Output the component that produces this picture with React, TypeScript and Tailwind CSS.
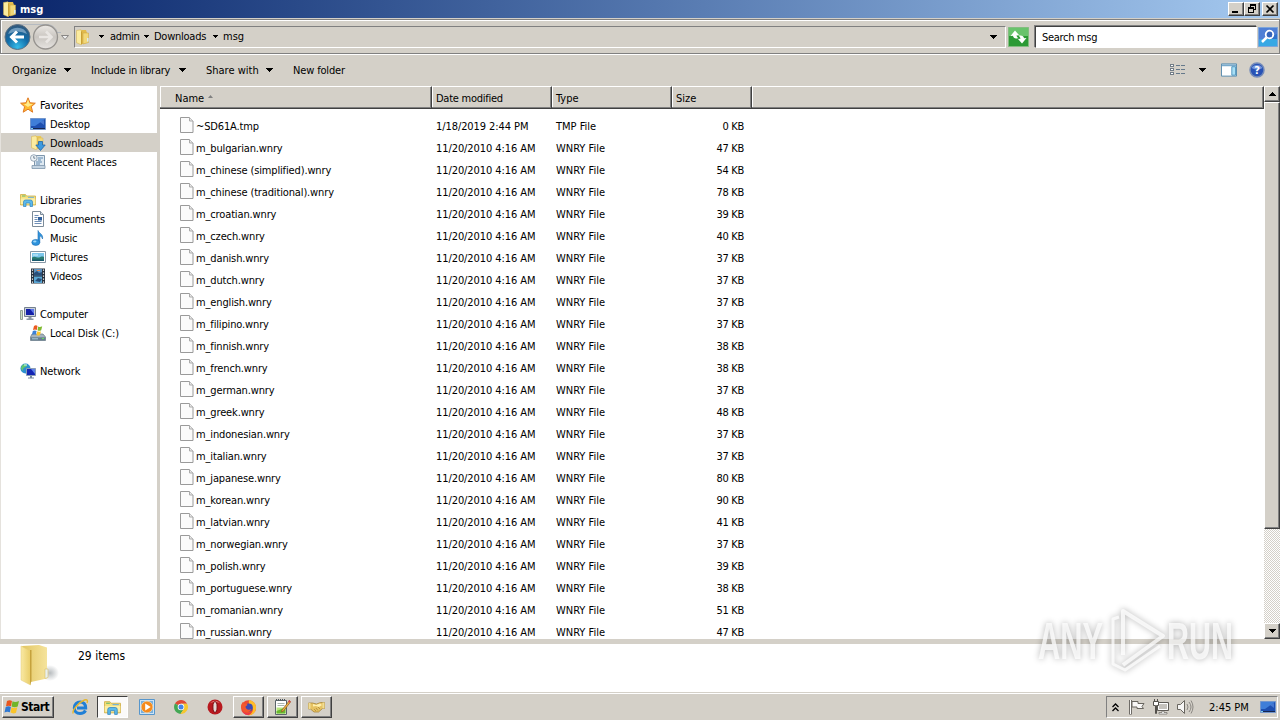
import type { ReactNode } from "react";

type IconProps = { size?: number };

type NavItem = {
  label: string;
  icon: ReactNode;
  child?: boolean;
  active?: boolean;
};

const raised =
  "border border-t-white border-l-white border-r-[#404040] border-b-[#404040] shadow-[inset_-1px_-1px_0_#808080]";

function FolderIcon({ size = 16 }: IconProps) {
  return (
    <svg width={size} height={size} viewBox="0 0 16 16" className="shrink-0">
      <path d="M6 1h5l1 3v10l-5 1z" fill="#e3bc4c" />
      <path d="M8 4h5.500v9.500L8 15z" fill="#f2d878" stroke="#c9a33c" strokeWidth=".5" />
      <path d="M1.500 1.500L6 .8l1 1.700V15l-1 .7-4.500-2z" fill="#fbeb9f" stroke="#d2ae48" strokeWidth=".5" />
      <path d="M6 2l1 .5V15l-1 .5z" fill="#c9a035" />
      <path d="M12 9h1.500v3.500H12z" fill="#dcebed" />
    </svg>
  );
}

function BigFolderIcon() {
  return (
    <svg width="42" height="44" viewBox="0 0 42 44">
      <defs>
        <linearGradient id="flap">
          <stop offset="0" stopColor="#f9e9a4" />
          <stop offset="1" stopColor="#e9cd68" />
        </linearGradient>
        <linearGradient id="leaf">
          <stop offset="0" stopColor="#e2c662" />
          <stop offset="1" stopColor="#f5e39c" />
        </linearGradient>
        <radialGradient id="shade">
          <stop offset="0" stopColor="#9aa0a4" stopOpacity=".7" />
          <stop offset="1" stopColor="#9aa0a4" stopOpacity="0" />
        </radialGradient>
      </defs>
      <ellipse cx="31" cy="29" rx="9" ry="8" fill="url(#shade)" />
      <path d="M3 2L20 1l8 2.500v31L12 38z" fill="url(#leaf)" />
      <path d="M2 2l9.500 5v34L2 36z" fill="url(#flap)" stroke="#e2ca78" strokeWidth=".5" />
      <path d="M11 6l1.500 0v31l-1.500 4z" fill="#c5a23d" />
      <path d="M26 25h3v8.500l-3 1z" fill="#e9f0ef" stroke="#d8bf6b" strokeWidth=".6" />
    </svg>
  );
}

function StarIcon() {
  return (
    <svg width="16" height="16" viewBox="0 0 16 16">
      <path
        d="M8 .8l2 5 5.300.4-4 3.500 1.400 5.500L8 12.200 3.200 15.200l1.400-5.500-4-3.500L6 5.800z"
        fill="#ffb92e"
        stroke="#e07a26"
      />
      <path d="M8 2.500l1.500 4.300 3.500.4-3.500 1.800L8 10l-4-2.800 2.500-.4z" fill="#ffeb8c" />
    </svg>
  );
}

function DesktopIcon({ size = 16 }: IconProps) {
  return (
    <svg width={size} height={size} viewBox="0 0 16 16">
      <path d="M.5 2.500h15v11H.5z" fill="#1d4fb0" stroke="#7396cc" />
      <path d="M1 3h14L5 10H1z" fill="#3f7ed8" />
      <path d="M1 12h14v1H1z" fill="#16264f" />
      <path d="M1 12h2v1H1z" fill="#79d0f0" />
      <path d="M10 6l4-2v5z" fill="#6d9ff0" opacity=".5" />
    </svg>
  );
}

function DownloadsIcon() {
  return (
    <svg width="16" height="16" viewBox="0 0 16 16">
      <path d="M6 1h5l1 3v9l-5 1z" fill="#e9c85a" />
      <path d="M8 3h5v9l-5 2z" fill="#f2d878" stroke="#d0ab48" strokeWidth=".4" />
      <path d="M1.500 1.500L6 .8l1 1.700V14l-1 .7-4.500-2z" fill="#fbeb9f" stroke="#d2ae48" strokeWidth=".5" />
      <path d="M8.500 6.500h4V10h2.700L10.500 15.500 5.800 10h2.700z" fill="#3d9ae0" stroke="#1f65aa" strokeWidth=".8" />
    </svg>
  );
}

function RecentIcon() {
  return (
    <svg width="16" height="16" viewBox="0 0 16 16">
      <path d="M4.500 1.500h10v11h-10z" fill="#dde8f1" stroke="#7e96ac" />
      <path d="M2 11.500h13v3H2z" fill="#c4d4e2" stroke="#7e96ac" strokeWidth=".8" />
      <path d="M8 4h5M8 6h3M6 8h6M6 10h4" stroke="#5f88b0" />
      <circle cx="3.800" cy="4" r="3.300" fill="#eef3f7" stroke="#8093a6" strokeWidth=".8" />
      <path d="M3.800 2v2.200h1.500" fill="none" stroke="#53687c" strokeWidth=".8" />
    </svg>
  );
}

function LibraryIcon({ size = 16 }: IconProps) {
  return (
    <svg width={size} height={size} viewBox="0 0 16 16">
      <path d="M.5 2.500h5l1 1.500h9v9H.5z" fill="#f6e17c" stroke="#cfae45" strokeWidth=".8" />
      <path d="M2 3.500h3.500v1H2z" fill="#62b56c" />
      <path d="M8 4.800h6v1H8z" fill="#69aee0" />
      <path d="M.7 6.500h14.600V12H.7z" fill="#fbeea6" />
      <path d="M3.500 14.500V10q0-2 2-2h5q2 0 2 2v4.500h-2.500V11h-4v3.500z" fill="#5cb9ea" stroke="#2f83bd" strokeWidth=".7" />
    </svg>
  );
}

function DocumentIcon() {
  return (
    <svg width="16" height="16" viewBox="0 0 16 16">
      <path d="M2.500.5h8l3 3v12h-11z" fill="#fff" stroke="#7c8b99" />
      <path d="M10.500.5v3h3" fill="#d9e2e9" stroke="#7c8b99" />
      <path d="M4.500 4.500h4M4.500 6.500h3M4.500 8.500h3M4.500 10.500h7M4.500 12.500h7" stroke="#6f8fb7" />
      <path d="M8 6h4v3.500H8z" fill="#2f5f9c" />
    </svg>
  );
}

function MusicIcon() {
  return (
    <svg width="16" height="16" viewBox="0 0 16 16">
      <path d="M8 .5c1 3 5.500 3.500 4.500 8.500-.5-2-1.500-2.700-2.700-3v6.500H8z" fill="#3397de" stroke="#1b6db4" strokeWidth=".6" />
      <ellipse cx="5.800" cy="12.400" rx="4" ry="3" fill="#2e93dc" stroke="#1b6db4" strokeWidth=".6" />
      <ellipse cx="4.800" cy="11.500" rx="1.700" ry="1" fill="#9fd8fa" />
    </svg>
  );
}

function PictureIcon() {
  return (
    <svg width="16" height="16" viewBox="0 0 16 16">
      <path d="M.5 2.500h15v11H.5z" fill="#fff" stroke="#8797a5" />
      <path d="M2 4h12v8H2z" fill="#7cc6ea" />
      <path d="M2 8.500c3-2 5 .5 7 0s3-1.500 5-.5v4H2z" fill="#287a70" />
      <path d="M2 10.500h12V12H2z" fill="#17596d" />
      <path d="M3 5.500h5v1H3z" fill="#d7f1fb" />
    </svg>
  );
}

function VideoIcon() {
  return (
    <svg width="16" height="16" viewBox="0 0 16 16">
      <path d="M1 .5h14v15H1z" fill="#252f3b" />
      <path d="M4 1h8v6.500H4z" fill="#5c91bf" />
      <path d="M4 8.500h8V15H4z" fill="#5aa7d5" />
      <path d="M4 5l3-2 2 2 3-1v3.500H4zM5 13l3-3 4 1-2 3z" fill="#284e79" />
      <path d="M7 2h3v1H7z" fill="#e58a54" />
      <path d="M2.500 1.500v14M13.500 1.500v14" stroke="#fff" strokeWidth="1.200" strokeDasharray="1.300 1.700" />
    </svg>
  );
}

function ComputerIcon() {
  return (
    <svg width="16" height="16" viewBox="0 0 16 16">
      <path d="M.5 4.500h2v9h-2z" fill="#cfe0c5" stroke="#7f8c86" strokeWidth=".8" />
      <path d="M4.500 1.500h11v9h-11z" fill="#c8d0da" stroke="#74808e" />
      <path d="M6 3h8v6H6z" fill="#1420a8" />
      <path d="M10 3h4v5z" fill="#5d77e8" />
      <path d="M8.500 11h3v1.500h2V14h-7v-1.500h2z" fill="#8b97a5" />
    </svg>
  );
}

function DiskIcon() {
  return (
    <svg width="16" height="16" viewBox="0 0 16 16">
      <path d="M2 9h11l2.500 3v3.500H.5V12z" fill="#a4b2bd" stroke="#677783" strokeWidth=".7" />
      <path d="M.8 12.300h14.500v3H.8z" fill="#667e8f" />
      <path d="M2 13.300h6v1H2z" fill="#a9cbdc" />
      <path d="M12 13h2v1h-2z" fill="#62df58" />
      <path d="M4 1c1.300-.9 2.500-.9 3.500 0L6.800 5C5.500 4.300 4.500 4.300 3 5z" fill="#eb5b21" />
      <path d="M8.200 1.500c1.500.8 2.500.6 4-.3l-1 4c-1.300.8-2.500.8-3.700.1z" fill="#7fba30" />
      <path d="M2.800 6c1.500-.8 2.700-.7 3.800 0l-.8 3.700c-1.300-.7-2.300-.6-3.800.1z" fill="#3b81d6" />
      <path d="M7.300 6.300c1.300.7 2.300.6 3.700-.1l-1 3.800c-1.200.7-2.500.7-3.500 0z" fill="#f9c52e" />
    </svg>
  );
}

function NetworkIcon() {
  return (
    <svg width="16" height="16" viewBox="0 0 16 16">
      <circle cx="5.500" cy="5.500" r="5" fill="#2c8fd0" />
      <path d="M2 2.500c2-2 5-1.500 5 0S3 4 3 6.500 1.500 7 1 5z" fill="#62c76e" />
      <path d="M4 1.500h3v1H4z" fill="#cdf3f3" />
      <path d="M6.500 5.500h9v7h-9z" fill="#1425b3" stroke="#8b9db5" />
      <path d="M11 6h4v5z" fill="#5f82ea" />
      <path d="M10 13h2v1.500h2v1H8v-1h2z" fill="#76899d" />
    </svg>
  );
}

function FileIcon() {
  return (
    <svg width="14" height="16" viewBox="0 0 14 16" className="mb-0.5 shrink-0">
      <path d="M.5.5h9l3.500 3.500v11.500H.5z" fill="#fbfbfb" stroke="#9a9a9a" />
      <path d="M9.500.5v3.500H13" fill="#e8e8e8" stroke="#aaa" />
    </svg>
  );
}

function WindowsFlag() {
  return (
    <svg width="16" height="16" viewBox="0 0 16 16" className="shrink-0">
      <path d="M3 2c2-1.200 3.700-1 5 0L7 7.300C5.500 6.400 4 6.400 2 7.300z" fill="#e8561f" />
      <path d="M8.500 2.300c2 1.100 4 .8 6.500-.3l-1.300 5.400c-2 1-4.200 1-6.100 0z" fill="#70b52a" />
      <path d="M1.700 8c2-1 3.700-.9 5.200 0l-1 5.300C4 12.500 2.500 12.500.5 13.400z" fill="#2f78d2" />
      <path d="M7.500 8.200c1.800 1 3.800.9 5.800 0L12 13.700c-2 1-3.500.9-5.500-.1z" fill="#fac42a" />
    </svg>
  );
}

function ExplorerE() {
  return (
    <svg width="18" height="18" viewBox="0 0 18 18">
      <path
        d="M14.500 12.500c-1 2-3 3-5.500 3-3.500 0-5.700-2.300-5.700-5.500C3.300 6.500 6 4 9.200 4c3.400 0 5.600 2.300 5.500 6H6"
        fill="none"
        stroke="#1f7fd6"
        strokeWidth="3"
      />
      <path d="M2.300 15.500C.5 13 8 4 13.500 2c3-1 3.500 1 2.500 3" fill="none" stroke="#e5b62c" strokeWidth="1.400" />
    </svg>
  );
}

function MediaPlayerIcon() {
  return (
    <svg width="16" height="16" viewBox="0 0 16 16">
      <path d="M.5.500h15v15H.5z" fill="#cbe3f6" stroke="#5796cc" />
      <path d="M2 2h12v12H2z" fill="#79b0dd" />
      <circle cx="8" cy="8" r="5.800" fill="#f58a1c" stroke="#ffd6a0" strokeWidth=".7" />
      <path d="M6.200 4.500v7L11.700 8z" fill="#fff" />
    </svg>
  );
}

function ChromeIcon() {
  return (
    <svg width="14" height="14" viewBox="0 0 14 14">
      <path d="M7 7L1 3.500A7 7 0 0113.100 3.700H7z" fill="#df4937" />
      <path d="M7 7L1 3.500a7 7 0 005.500 10.500L10 8.700z" fill="#43a754" />
      <path d="M7 3.700h6.100A7 7 0 016.500 14L10 8.700z" fill="#f6c72e" />
      <circle cx="7" cy="7" r="3.300" fill="#fff" />
      <circle cx="7" cy="7" r="2.500" fill="#4383e8" />
    </svg>
  );
}

function OperaIcon() {
  return (
    <svg width="16" height="16" viewBox="0 0 16 16">
      <circle cx="8" cy="8" r="7.500" fill="#b8191f" />
      <path d="M3 4.500a6 6 0 0110 0C11 2.500 5 2.500 3 4.500z" fill="#e0716d" />
      <ellipse cx="8" cy="8" rx="2.100" ry="5.400" fill="#e3d6d3" stroke="#7b0b10" />
    </svg>
  );
}

function FirefoxIcon() {
  return (
    <svg width="17" height="17" viewBox="0 0 17 17">
      <circle cx="8.500" cy="8.800" r="7.500" fill="#ee4c31" />
      <path d="M9 1c5 1 8 5 6.800 9.500C15 14 12 16.300 8.500 16.300c5-2 5.500-7 2.500-9C9 6 8.500 4 9 1z" fill="#ffbd28" />
      <circle cx="8.800" cy="8.500" r="4" fill="#3b4bb5" />
      <path d="M1 8c0-2.500 1-4 2-5l1 2c2-.7 3 0 3.500 1L5.500 7.500c0 3 3 4 6 2.500-1 3-6 4.500-8.500 1.500z" fill="#f2582f" />
      <path d="M2 12c3 3.500 7 3 9 1.500-2 3-6.500 3-9-1.500z" fill="#e92961" />
    </svg>
  );
}

function NotepadIcon() {
  return (
    <svg width="17" height="17" viewBox="0 0 17 17">
      <path d="M1.500 1.500h11v14h-11z" fill="#fff" stroke="#5b6469" />
      <path d="M2 .5h10" stroke="#49545c" strokeWidth="1.600" strokeDasharray="1 1" />
      <path d="M3.500 4.500h7M3.500 6.500h7" stroke="#a9b5ae" />
      <path d="M2.500 8.500h9v6h-9z" fill="#b9e67c" />
      <path d="M2.500 12l9-3.500v6h-9z" fill="#69b92e" />
      <path d="M15.500 1.500L8 11l-.5 2 2-1L16.500 3z" fill="#f1b33d" stroke="#8c5826" strokeWidth=".7" />
      <path d="M15 1l1.800 1.500-1 1.300-1.700-1.400z" fill="#d8424a" />
    </svg>
  );
}

function HandshakeIcon() {
  return (
    <svg width="17" height="12" viewBox="0 0 17 12">
      <path d="M.5 2h4l4 1 4-1.500h4v6h-2l-4 3.500H6L2.500 8h-2z" fill="#e6c263" stroke="#a17c2c" strokeWidth=".7" />
      <path d="M5 3l3 1 4-1.500 2 1.500-3 2-3-1-3 .5z" fill="#fff0ae" />
      <path d="M.5 2h2v6h-2zM14.500 1.500h2v6h-2z" fill="#f1dd93" />
      <path d="M6 8l2 2M8 7l2 2.500M10 6l2 2" stroke="#a58333" strokeWidth=".7" />
    </svg>
  );
}

function Caret({ className = "" }: { className?: string }) {
  return (
    <svg width="7" height="4" viewBox="0 0 7 4" className={className} shapeRendering="crispEdges">
      <path d="M0 0h7L3.500 4z" fill="#000" />
    </svg>
  );
}

function CrumbCaret() {
  return (
    <svg width="5" height="3" viewBox="0 0 5 3" shapeRendering="crispEdges">
      <path d="M0 0h5v1H4v1H3v1H2V2H1V1H0z" fill="#000" />
    </svg>
  );
}

const nav: NavItem[][] = [
  [
    { label: "Favorites", icon: <StarIcon /> },
    { label: "Desktop", icon: <DesktopIcon />, child: true },
    { label: "Downloads", icon: <DownloadsIcon />, child: true, active: true },
    { label: "Recent Places", icon: <RecentIcon />, child: true },
  ],
  [
    { label: "Libraries", icon: <LibraryIcon /> },
    { label: "Documents", icon: <DocumentIcon />, child: true },
    { label: "Music", icon: <MusicIcon />, child: true },
    { label: "Pictures", icon: <PictureIcon />, child: true },
    { label: "Videos", icon: <VideoIcon />, child: true },
  ],
  [
    { label: "Computer", icon: <ComputerIcon /> },
    { label: "Local Disk (C:)", icon: <DiskIcon />, child: true },
  ],
  [{ label: "Network", icon: <NetworkIcon /> }],
];

const messages: [string, number][] = [
  ["bulgarian", 47],
  ["chinese (simplified)", 54],
  ["chinese (traditional)", 78],
  ["croatian", 39],
  ["czech", 40],
  ["danish", 37],
  ["dutch", 37],
  ["english", 37],
  ["filipino", 37],
  ["finnish", 38],
  ["french", 38],
  ["german", 37],
  ["greek", 48],
  ["indonesian", 37],
  ["italian", 37],
  ["japanese", 80],
  ["korean", 90],
  ["latvian", 41],
  ["norwegian", 37],
  ["polish", 39],
  ["portuguese", 38],
  ["romanian", 51],
  ["russian", 47],
];

const files = [
  { name: "~SD61A.tmp", date: "1/18/2019 2:44 PM", type: "TMP File", size: 0 },
  ...messages.map(([lang, size]) => ({
    name: `m_${lang}.wnry`,
    date: "11/20/2010 4:16 AM",
    type: "WNRY File",
    size,
  })),
];

function TitleBar() {
  const button = `flex h-[14px] w-4 items-center justify-center bg-[#d4d0c8] ${raised}`;
  return (
    <div className="flex h-[18px] shrink-0 items-center bg-linear-to-r from-[#0a246a] to-[#a6caf0] pr-0.5 pl-0.5">
      <FolderIcon />
      <span className="ml-[2px] flex-1 text-[11px] font-bold text-white">msg</span>
      <div className={button}>
        <svg width="12" height="10" shapeRendering="crispEdges">
          <path d="M2 7h6v2H2z" />
        </svg>
      </div>
      <div className={button}>
        <svg width="12" height="10" shapeRendering="crispEdges">
          <path d="M4 0h6v6H8V5h1V2H5v1H4zM2 3h6v6H2zM3 5v3h4V5z" fillRule="evenodd" />
        </svg>
      </div>
      <div className={`ml-0.5 ${button}`}>
        <svg width="12" height="10">
          <path d="M2.500 1.500l7 7M9.500 1.500l-7 7" stroke="#000" strokeWidth="1.700" />
        </svg>
      </div>
    </div>
  );
}

function AddressBar() {
  return (
    <div className="mt-px flex h-[35px] shrink-0 items-center border border-[#808080] pl-[3px] shadow-[inset_1px_1px_0_#fff,0_1px_0_#fff]">
      <svg width="69" height="28" viewBox="0 0 69 28" className="shrink-0">
        <defs>
          <radialGradient id="back" cx=".5" cy=".9" r=".9">
            <stop offset="0" stopColor="#36bce9" />
            <stop offset=".5" stopColor="#126ca8" />
            <stop offset="1" stopColor="#345779" />
          </radialGradient>
          <linearGradient id="forward" x2="0" y2="1">
            <stop offset="0" stopColor="#ece9e5" />
            <stop offset=".5" stopColor="#c9c5c0" />
            <stop offset="1" stopColor="#e7e4e1" />
          </linearGradient>
        </defs>
        <path d="M12 1.500h31c6 0 10 5 10 8h4" fill="none" stroke="#b5bac0" />
        <circle cx="13.500" cy="14" r="12.500" fill="url(#back)" stroke="#5f7283" />
        <path d="M4 11a10 9 0 0119 0q-9-5-19 0z" fill="#8fb3d1" opacity=".7" />
        <path d="M13 8.500L7.500 14l5.500 5.500M8 14h12" fill="none" stroke="#fff" strokeWidth="3" />
        <circle cx="41.500" cy="14" r="12" fill="url(#forward)" stroke="#96938f" strokeWidth="1.300" />
        <path d="M42 8.500l5.500 5.500-5.500 5.500M47 14H35" fill="none" stroke="#e9e6e3" strokeWidth="2.600" />
        <path d="M57.500 12.500h7L61 16.500z" fill="#eee" stroke="#898785" />
      </svg>
      <div className="ml-px flex h-[22px] flex-1 items-center border border-t-[#808080] border-r-white border-b-white border-l-[#808080]">
        <FolderIcon />
        <div className="flex items-center pl-2">
          <CrumbCaret />
          <span className="ml-[6px] w-[34px] tracking-[-0.3px]">admin</span>
          <CrumbCaret />
          <span className="ml-[5px] w-[59px] tracking-[-0.25px]">Downloads</span>
          <CrumbCaret />
          <span className="ml-[5px]">msg</span>
        </div>
        <Caret className="mr-2 ml-auto" />
      </div>
      <svg width="21" height="20" viewBox="0 0 21 20" className="ml-0.5">
        <path d="M.5.500h20v19H.5z" fill="#2c9a35" stroke="#83bd80" />
        <path d="M1 1h19v8H1z" fill="#68c36b" />
        <path d="M2.500 9L7 3.500 11 8l-2.500.3c.3 1.700 1.500 2.700 2 3.200C7 11.500 5 11 5 8.700z" fill="#fff" />
        <path d="M18.500 11L14 16.500 10 12l2.500-.3c-.3-1.700-1.500-2.700-2-3.200C14 8.500 16 9 16 11.300z" fill="#fff" />
      </svg>
      <div className="ml-[6px] flex h-[22px] w-[222px] items-center border border-t-[#404040] border-r-white border-b-white border-l-[#404040] bg-white pt-px pl-[6px] tracking-[-0.3px] shadow-[-1px_-1px_0_#808080]">
        Search msg
      </div>
      <svg width="20" height="20" viewBox="0 0 20 20" className="mr-px ml-px">
        <path d="M.5.500h19v19H.5z" fill="#3172cb" stroke="#7da5d9" />
        <path d="M1 12h18v7H1z" fill="#38a8e4" />
        <path d="M1 1h18v6L1 13z" fill="#5c84d8" opacity=".7" />
        <circle cx="11.500" cy="7.500" r="3.800" fill="#3564bb" stroke="#fff" strokeWidth="1.800" />
        <path d="M8.500 10.500L4 15" stroke="#fff" strokeWidth="2.500" />
      </svg>
    </div>
  );
}

function Toolbar() {
  return (
    <div className="flex h-[31px] shrink-0 items-center pt-px pr-[15px] pl-3">
      <span className="w-[52px]">Organize</span>
      <Caret />
      <span className="ml-5 w-[88px] tracking-[-0.22px]">Include in library</span>
      <Caret />
      <span className="ml-5 w-[60px]">Share with</span>
      <Caret />
      <span className="ml-5 tracking-[-0.15px]">New folder</span>
      <svg width="16" height="14" viewBox="0 0 16 14" className="ml-auto" shapeRendering="crispEdges">
        <path d="M.5 1.500h3v2h-3zM.5 5.500h3v2h-3zM.5 9.500h3v2h-3z" fill="#fff" stroke="#727d87" />
        <path d="M6 2.500h4M11 2.500h4M6 6.500h4M11 6.500h4M6 10.500h4M11 10.500h4" stroke="#65798b" />
      </svg>
      <Caret className="ml-[13px]" />
      <svg width="16" height="14" viewBox="0 0 17 14" className="ml-[15px]">
        <path d="M.5.500h16v13H.5z" fill="#fff" stroke="#5389ad" />
        <path d="M1 1h15v2H1z" fill="#79aacb" />
        <path d="M11.500 3.500h4v9h-4z" fill="#a8dff5" stroke="#4c92bd" />
      </svg>
      <svg width="16" height="16" viewBox="0 0 16 16" className="ml-3">
        <circle cx="8" cy="8" r="7" fill="#2852b5" stroke="#748bb9" strokeWidth="1.500" />
        <path d="M2.500 6a6 5 0 0111 0q-5 3-11 0z" fill="#7396dc" />
        <text x="8" y="12" textAnchor="middle" fontSize="11" fontWeight="bold" fill="#fff">
          ?
        </text>
      </svg>
    </div>
  );
}

function Sidebar() {
  return (
    <nav className="flex w-[157px] shrink-0 flex-col gap-[19px] overflow-hidden border-l border-[#e5e2dd] bg-white pt-[9px]">
      {nav.map((group) => (
        <div key={group[0].label}>
          {group.map((item) => (
            <div
              key={item.label}
              className={`flex h-[19px] items-center gap-1 ${item.child ? "pl-[29px]" : "pl-[19px]"} ${
                item.active ? "bg-[#d4d0c8]" : ""
              }`}
            >
              {item.icon}
              <span className="pt-0.5 tracking-[-0.15px]">{item.label}</span>
            </div>
          ))}
        </div>
      ))}
    </nav>
  );
}

function FileList() {
  const head =
    "flex items-center border-t border-r border-b border-t-white border-r-[#404040] border-b-[#404040] pt-0.5 pl-1 shadow-[inset_-1px_-1px_0_#808080,inset_1px_0_0_#fff]";
  return (
    <main className="flex min-w-0 flex-1 flex-col overflow-hidden bg-white">
      <div className="flex h-[23px] shrink-0 bg-[#d4d0c8]">
        <div className={`${head} w-[272px] pl-[15px]`}>
          Name
          <svg width="5" height="3" className="mb-1 ml-[4px]">
            <path d="M0 3h5L2.500 0z" fill="#808080" />
          </svg>
        </div>
        <div className={`${head} w-[120px] tracking-[-0.25px]`}>Date modified</div>
        <div className={`${head} w-[120px]`}>Type</div>
        <div className={`${head} w-[80px]`}>Size</div>
        <div className={`${head} flex-1`} />
      </div>
      <div className="pt-[6px]">
        {files.map((file) => (
          <div key={file.name} className="flex h-[22px] items-center pl-[20px]">
            <div className="flex w-[256px] items-center gap-[2px]">
              <FileIcon />
              <span className="tracking-[-0.14px]">{file.name}</span>
            </div>
            <span className="w-[120px] tracking-[-0.08px]">{file.date}</span>
            <span className="w-[119px]">{file.type}</span>
            <span className="w-[69px] text-right tracking-[-0.3px]">{file.size} KB</span>
          </div>
        ))}
      </div>
    </main>
  );
}

function Scrollbar() {
  return (
    <div className="flex w-4 shrink-0 flex-col bg-[repeating-conic-gradient(#fff_0_25%,#d4d0c8_0_50%)] bg-[length:2px_2px]">
      <div className={`flex h-4 items-center justify-center bg-[#d4d0c8] ${raised}`}>
        <Caret className="rotate-180" />
      </div>
      <div className={`h-[427px] bg-[#d4d0c8] ${raised}`} />
      <div className={`mt-auto flex h-4 items-center justify-center bg-[#d4d0c8] ${raised}`}>
        <Caret />
      </div>
    </div>
  );
}

function Watermark() {
  return (
    <div className="absolute top-[600px] left-[1030px]">
      <svg
        width="220"
        height="80"
        viewBox="0 0 220 80"
        className="overflow-visible drop-shadow-[0_0_3px_rgba(0,0,0,0.4)]"
      >
        <g fill="none" stroke="#fff" strokeOpacity=".75" strokeWidth="4" strokeLinejoin="round">
          <path d="M93 55V11l40 25-40 29" />
          <path d="M89 17l-6 2v45l12 6 35-24" strokeWidth="3" />
        </g>
        <g fill="#fff" fillOpacity=".75" fontFamily="Liberation Sans" fontSize="51" fontWeight="bold">
          <text x="8" y="59" textLength="65" lengthAdjust="spacingAndGlyphs">
            ANY
          </text>
          <text x="137" y="59" textLength="66" lengthAdjust="spacingAndGlyphs">
            RUN
          </text>
        </g>
      </svg>
    </div>
  );
}

function Taskbar() {
  const task = `flex h-[22px] w-[31px] items-center justify-center ${raised}`;
  return (
    <footer className="flex h-7 shrink-0 items-center border-t border-[#d4d0c8] bg-[#d4d0c8] pt-px pr-[2px] pl-[2px] shadow-[inset_0_1px_0_#fff]">
      <button className={`flex h-[22px] w-[52px] items-center gap-px pl-px text-[12px] font-bold tracking-[-0.5px] ${raised}`}>
        <WindowsFlag />
        Start
      </button>
      <div className="ml-[17px] flex items-center">
        <ExplorerE />
        <div className="ml-2 flex h-[22px] w-[31px] items-center justify-center border border-t-[#404040] border-r-white border-b-white border-l-[#404040] bg-[#fbfaf9]">
          <LibraryIcon size={17} />
        </div>
        <div className="ml-[11px]">
          <MediaPlayerIcon />
        </div>
        <div className="ml-[19px]">
          <ChromeIcon />
        </div>
        <div className="ml-[19px]">
          <OperaIcon />
        </div>
      </div>
      <div className="ml-[10px] flex gap-[3px]">
        <div className={task}>
          <FirefoxIcon />
        </div>
        <div className={task}>
          <NotepadIcon />
        </div>
        <div className={task}>
          <HandshakeIcon />
        </div>
      </div>
      <div className="ml-auto flex h-[22px] w-[172px] items-center border border-t-[#808080] border-r-white border-b-white border-l-[#808080] pl-[5px]">
        <svg width="7" height="9" viewBox="0 0 7 9">
          <path d="M.5 4L3.500 1l3 3M.5 8l3-3 3 3" fill="none" stroke="#000" strokeWidth="1.300" />
        </svg>
        <svg width="16" height="16" viewBox="0 0 16 16" className="ml-[10px]">
          <path d="M1.500 1v14.500" stroke="#56534f" strokeWidth="2.600" />
          <path d="M1.500 1v14" stroke="#fff" />
          <path d="M3 2.500h6v2h6l-2 3 1.500 2H8v-1.500H3z" fill="#f8f7f6" stroke="#68655f" />
        </svg>
        <svg width="16" height="16" viewBox="0 0 16 16" className="ml-2">
          <path d="M4.500 3.500h11v8h-11z" fill="#c5c2bd" stroke="#5e5b56" />
          <path d="M5.500 4.500h9v6h-9z" fill="none" stroke="#fff" />
          <path d="M9 12h2v1.500h3V15H6v-1.500h3z" fill="#fff" stroke="#68655f" strokeWidth=".7" />
          <path d="M.5 2.500h5v4h-2v8h-1v-8h-2zM1.500 0v2M4.500 0v2" fill="#fff" stroke="#53504b" />
        </svg>
        <svg width="17" height="16" viewBox="0 0 17 16" className="ml-2">
          <path d="M.5 5.500h3l4-4v13l-4-4h-3z" fill="#f7f6f5" stroke="#68655f" />
          <path d="M10 5q2 3 0 6M12 3q4 5 0 10M14 1.500q4 6.500 0 13" fill="none" stroke="#8a8782" />
        </svg>
        <span className="ml-[15px] w-[42px]">2:45 PM</span>
        <div className="ml-[9px]">
          <DesktopIcon />
        </div>
      </div>
    </footer>
  );
}

export default function App() {
  return (
    <div className="relative flex h-[720px] w-[1280px] flex-col overflow-hidden bg-[#d4d0c8] font-['DejaVu_Sans_Condensed','DejaVu_Sans',sans-serif] text-[11px] leading-[13px] font-stretch-condensed whitespace-nowrap text-black">
      <TitleBar />
      <AddressBar />
      <Toolbar />
      <div className="mt-px flex min-h-0 flex-1">
        <Sidebar />
        <div className="w-[3px] shrink-0 bg-[#d4d0c8]" />
        <FileList />
        <Scrollbar />
      </div>
      <div className="flex h-[53px] shrink-0 border-t-[5px] border-[#d4d0c8] bg-white pl-[19px]">
        <BigFolderIcon />
        <span className="mt-[5px] ml-[17px] text-[12px] leading-[14px]">29 items</span>
      </div>
      <Taskbar />
      <Watermark />
    </div>
  );
}
